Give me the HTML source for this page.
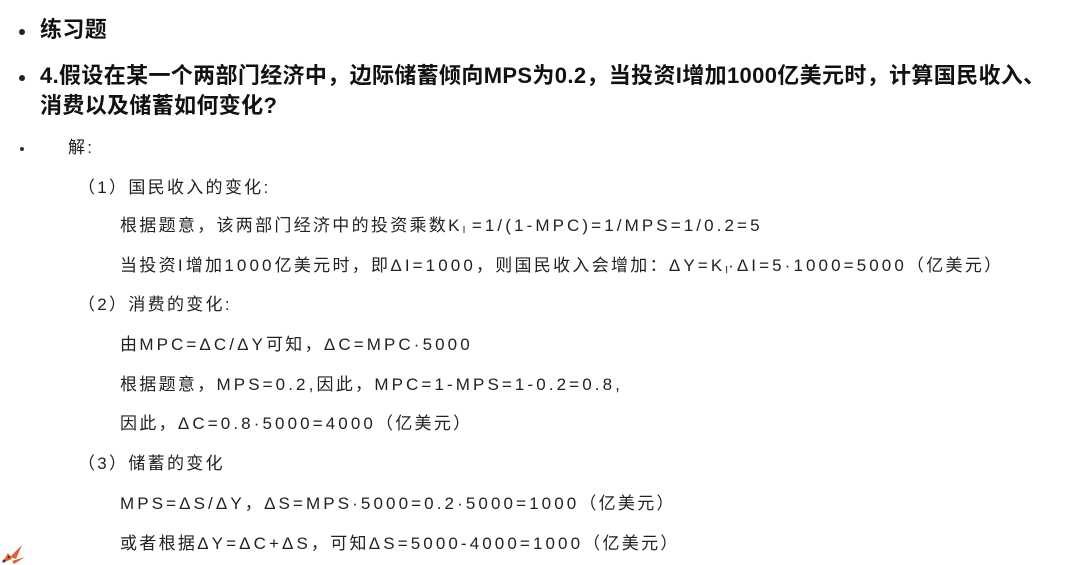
<!DOCTYPE html>
<html><head><meta charset="utf-8"><style>
html,body{margin:0;padding:0;background:#fff;}
body{width:1077px;height:565px;position:relative;overflow:hidden;font-family:"Liberation Sans","Noto Sans CJK SC",sans-serif;color:#111;}
.l{position:absolute;white-space:nowrap;line-height:1;}
.b{font-weight:bold;font-size:22px;letter-spacing:0.35px;}
.n{font-size:17px;letter-spacing:2.3px;color:#222;}
.n i{font-style:normal;letter-spacing:3.1px;}
.dot{position:absolute;width:6px;height:6px;border-radius:50%;background:#222;}
.sdot{position:absolute;width:4px;height:4px;border-radius:50%;background:#333;}
sub{font-size:10px;vertical-align:-2px;letter-spacing:0}
</style></head><body>
<div class="dot" style="left:19px;top:29px"></div>
<div class="l b" style="left:40px;top:19px">练习题</div>
<div class="dot" style="left:19px;top:75px"></div>
<div class="l b" style="left:40px;top:65px">4.假设在某一个两部门经济中，边际储蓄倾向MPS为0.2，当投资I增加1000亿美元时，计算国民收入、</div>
<div class="l b" style="left:40px;top:95px">消费以及储蓄如何变化?</div>
<div class="sdot" style="left:20px;top:147px"></div>
<div class="l n" style="left:68px;top:139px">解:</div>
<div class="l n" style="left:78px;top:179px">（1）国民收入的变化:</div>
<div class="l n" style="left:120px;top:217px">根据题意，该两部门经济中的投资乘数<i>K<sub>I</sub>&thinsp;=1/(1-MPC)=1/MPS=1/0.2=5</i></div>
<div class="l n" style="left:120px;top:257px">当投资<i>I</i>增加<i>1000</i>亿美元时，即<i>ΔI=1000</i>，则国民收入会增加：<i>ΔY=K<sub>I</sub>·ΔI=5·1000=5000</i>（亿美元）</div>
<div class="l n" style="left:78px;top:296px">（2）消费的变化:</div>
<div class="l n" style="left:120px;top:336px">由<i>MPC=ΔC/ΔY</i>可知，<i>ΔC=MPC·5000</i></div>
<div class="l n" style="left:120px;top:376px">根据题意，<i>MPS=0.2,</i>因此，<i>MPC=1-MPS=1-0.2=0.8,</i></div>
<div class="l n" style="left:120px;top:415px">因此，<i>ΔC=0.8·5000=4000</i>（亿美元）</div>
<div class="l n" style="left:78px;top:455px">（3）储蓄的变化</div>
<div class="l n" style="left:120px;top:495px"><i>MPS=ΔS/ΔY</i>，<i>ΔS=MPS·5000=0.2·5000=1000</i>（亿美元）</div>
<div class="l n" style="left:120px;top:535px">或者根据<i>ΔY=ΔC+ΔS</i>，可知<i>ΔS=5000-4000=1000</i>（亿美元）</div>
<svg style="position:absolute;left:0;top:535px" width="30" height="30"><path d="M2 28 L8 18 L12 24 Z M10 22 L22 10 L16 24 Z M12 26 L25 22 L14 29 Z" fill="#e0603a"/><circle cx="4" cy="26" r="1.5" fill="#333"/><circle cx="9" cy="22" r="1.2" fill="#333"/></svg>
</body></html>
